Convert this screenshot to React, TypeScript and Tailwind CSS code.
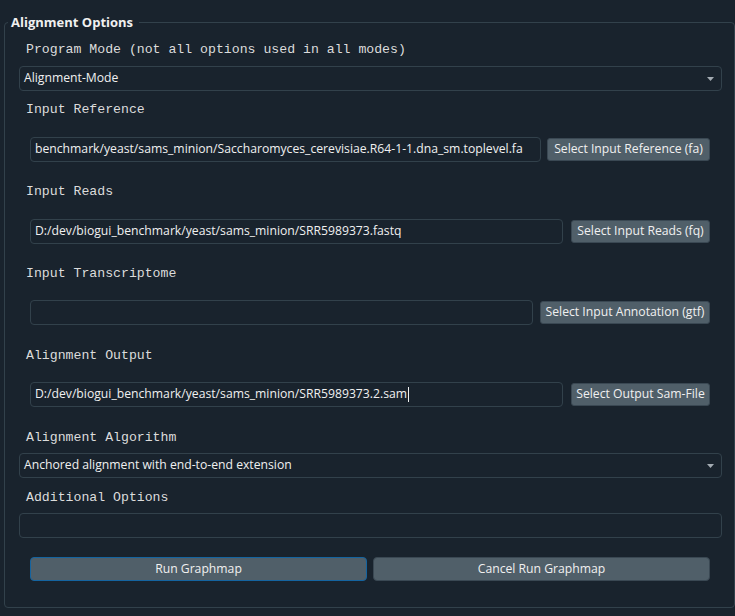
import React from 'react';

const sans = "font-['Open_Sans',sans-serif] text-[12.2px] text-[#f0f0f0]";

const FieldLabel: React.FC<{ text: string; className?: string }> = ({ text, className }) => (
    <div
        className={`h-4 pl-[7px] font-['Liberation_Mono',monospace] text-[13.2px] leading-[19px] text-[#dcdcdc] whitespace-pre ${className ?? ''}`}
    >
        {text}
    </div>
);

const Combo: React.FC<{ value: string; className?: string }> = ({ value, className }) => (
    <div
        className={`flex h-[25px] items-center justify-between rounded-[4px] border border-[#32414b] pl-[4px] pr-[7px] ${sans} ${className ?? ''}`}
    >
        <span>{value}</span>
        <svg width="7" height="4" viewBox="0 0 7 4">
            <path d="M0 0H7L3.5 4Z" fill="#a4acb3" />
        </svg>
    </div>
);

const TextBox: React.FC<{ value?: string; cursor?: boolean; className?: string }> = ({ value, cursor, className }) => (
    <div
        className={`flex h-[25px] items-center overflow-hidden whitespace-nowrap rounded-[4px] border border-[#32414b] px-[4px] ${sans} ${className ?? ''}`}
    >
        <span>{value}</span>
        {cursor && <span className="ml-px inline-block h-[15px] w-px bg-[#f0f0f0]" />}
    </div>
);

const PathRow: React.FC<{ value: string; button: string; buttonWidth: string; gap: string; cursor?: boolean; className?: string }> = ({
    value,
    button,
    buttonWidth,
    gap,
    cursor,
    className,
}) => (
    <div className={`flex items-center pl-[11px] pr-[12px] ${gap} ${className ?? ''}`}>
        <TextBox value={value} cursor={cursor} className="min-w-0 flex-1" />
        <button
            className={`flex h-[23px] shrink-0 items-center justify-center rounded-[3px] border border-[#3a4853] bg-[#505f69] ${sans} ${buttonWidth}`}
        >
            {button}
        </button>
    </div>
);

export default function App() {
    return (
        <div className="h-[616px] w-[735px] overflow-hidden bg-[#19232d] pt-[14px] pl-[4px]">
            <fieldset className="w-[731px] rounded-[4px] border border-[#32414b]">
                <legend className="ml-[3px] pl-[3px] pr-[6px] font-['Open_Sans',sans-serif] text-[13px] leading-4 font-bold text-[#f0f0f0]">
                    Alignment Options
                </legend>

                <div className="flex flex-col pt-[10px] pb-[26px] pl-[14px] pr-[12px]">
                    <FieldLabel text="Program Mode (not all options used in all modes)" />
                    <Combo value="Alignment-Mode" className="mt-[10px]" />

                    <FieldLabel text="Input Reference" className="mt-[9px]" />
                    <PathRow
                        value="benchmark/yeast/sams_minion/Saccharomyces_cerevisiae.R64-1-1.dna_sm.toplevel.fa"
                        button="Select Input Reference (fa)"
                        buttonWidth="w-[163px]"
                        gap="gap-[6px]"
                        className="mt-[21px]"
                    />

                    <FieldLabel text="Input Reads" className="mt-[20px]" />
                    <PathRow
                        value="D:/dev/biogui_benchmark/yeast/sams_minion/SRR5989373.fastq"
                        button="Select Input Reads (fq)"
                        buttonWidth="w-[139px]"
                        gap="gap-[8px]"
                        className="mt-[21px]"
                    />

                    <FieldLabel text="Input Transcriptome" className="mt-[20px]" />
                    <PathRow
                        value=""
                        button="Select Input Annotation (gtf)"
                        buttonWidth="w-[170px]"
                        gap="gap-[7px]"
                        className="mt-[20px]"
                    />

                    <FieldLabel text="Alignment Output" className="mt-[21px]" />
                    <PathRow
                        value="D:/dev/biogui_benchmark/yeast/sams_minion/SRR5989373.2.sam"
                        button="Select Output Sam-File"
                        buttonWidth="w-[139px]"
                        gap="gap-[8px]"
                        cursor
                        className="mt-[20px]"
                    />

                    <FieldLabel text="Alignment Algorithm" className="mt-[21px]" />
                    <Combo value="Anchored alignment with end-to-end extension" className="mt-[9px]" />

                    <FieldLabel text="Additional Options" className="mt-[10px]" />
                    <TextBox className="mt-[9px]" />

                    <div className="mt-[19px] flex gap-[6px] pl-[11px] pr-[12px]">
                        <button className={`h-[24px] flex-1 rounded-[4px] border border-[#1464a0] bg-[#505f69] ${sans}`}>
                            Run Graphmap
                        </button>
                        <button className={`h-[24px] flex-1 rounded-[4px] border border-[#3a4853] bg-[#505f69] ${sans}`}>
                            Cancel Run Graphmap
                        </button>
                    </div>
                </div>
            </fieldset>
        </div>
    );
}
